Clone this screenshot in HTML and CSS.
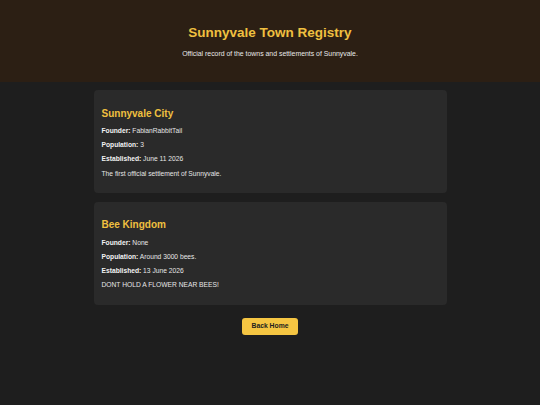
FILE: index.html
```html
<!DOCTYPE html>
<html lang="en">
<head>
<meta charset="utf-8">
<title>Sunnyvale Town Registry</title>
<link rel="stylesheet" href="styles.css">
</head>
<body>
<header class="site-header">
  <h1 class="site-title">Sunnyvale Town Registry</h1>
  <p class="site-sub">Official record of the towns and settlements of Sunnyvale.</p>
</header>
<main class="registry">
  <section class="town">
    <h2 class="town-name">Sunnyvale City</h2>
    <p class="town-line"><strong>Founder:</strong> FabianRabbitTail</p>
    <p class="town-line"><strong>Population:</strong> 3</p>
    <p class="town-line"><strong>Established:</strong> June 11 2026</p>
    <p class="town-line">The first official settlement of Sunnyvale.</p>
  </section>
  <section class="town">
    <h2 class="town-name">Bee Kingdom</h2>
    <p class="town-line"><strong>Founder:</strong> None</p>
    <p class="town-line"><strong>Population:</strong> Around 3000 bees.</p>
    <p class="town-line"><strong>Established:</strong> 13 June 2026</p>
    <p class="town-line">DONT HOLD A FLOWER NEAR BEES!</p>
  </section>
  <div class="actions">
    <a class="back-btn" href="#">Back Home</a>
  </div>
</main>
</body>
</html>
```

FILE: styles.css
```css
html, body {
  margin: 0;
  padding: 0;
}
body {
  background: #1e1e1e;
  color: #e6e6e6;
  font-family: "Liberation Sans", Arial, sans-serif;
  min-height: 405px;
}
.site-header {
  background: #2c1f14;
  text-align: center;
  padding: 25px 0 24.5px;
}
.site-title {
  margin: 0 0 9px;
  font-size: 13.5px;
  line-height: 15.5px;
  font-weight: bold;
  color: #f0c040;
}
.site-sub {
  margin: 0;
  font-size: 6.9px;
  line-height: 8px;
  color: #e8e8e8;
}
.registry {
  width: 353px;
  margin: 8px auto 0;
  display: flex;
  flex-direction: column;
  gap: 9px;
}
.town {
  background: #2a2a2a;
  border-radius: 4px;
  padding: 8px 8px 9px;
}
.town-name {
  margin: 9.5px 0 8px;
  font-size: 10px;
  line-height: 11.5px;
  font-weight: bold;
  color: #f0c040;
}
.town-line {
  margin: 0 0 6.5px;
  font-size: 6.7px;
  line-height: 7.7px;
  color: #e6e6e6;
}
.town-line:last-child {
  margin-bottom: 6.5px;
}
.town-line strong {
  font-weight: bold;
  color: #f2f2f2;
}
.actions {
  display: flex;
  justify-content: center;
  margin-top: 4px;
}
.back-btn {
  display: block;
  background: #f5c542;
  color: #1e1e1e;
  font-size: 6.8px;
  line-height: 8px;
  font-weight: bold;
  text-decoration: none;
  padding: 4.5px 9px;
  border-radius: 3px;
}
```
